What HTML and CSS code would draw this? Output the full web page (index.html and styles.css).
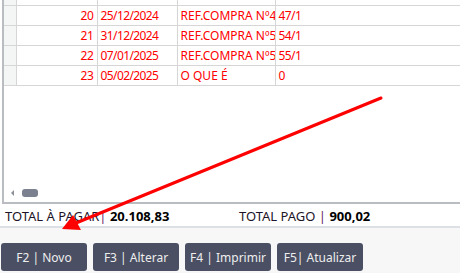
FILE: index.html
```html
<!DOCTYPE html>
<html>
	<head>
		<meta charset="utf-8"/>
		<title>Contas</title>
		<link rel="stylesheet" href="styles.css">
	</head>
	<body>
		<div class="grid">
			<table class="rows">
				<tr><td class="hd"></td><td class="num"></td><td class="dt"></td><td></td><td class="dt"></td></tr>
				<tr><td class="hd"></td><td class="num">20</td><td class="dt">25/12/2024</td><td>REF.COMPRA Nº4</td><td class="dt">47/1</td></tr>
				<tr><td class="hd"></td><td class="num">21</td><td class="dt">31/12/2024</td><td>REF.COMPRA Nº5</td><td class="dt">54/1</td></tr>
				<tr><td class="hd"></td><td class="num">22</td><td class="dt">07/01/2025</td><td>REF.COMPRA Nº5</td><td class="dt">55/1</td></tr>
				<tr><td class="hd"></td><td class="num">23</td><td class="dt">05/02/2025</td><td>O QUE É</td><td class="dt">0</td></tr>
			</table>
			<div class="fill"></div>
			<div class="hscroll">
				<span class="arr"></span>
				<span class="thumb"></span>
			</div>
		</div>

		<div class="totals">
			<p class="tot first">TOTAL À PAGAR<i>|</i> <b>20.108,83</b></p>
			<p class="tot">TOTAL PAGO <i>|</i> <b>900,02</b></p>
		</div>

		<div class="bar">
			<a href="#" class="btn">F2 | Novo</a>
			<a href="#" class="btn">F3 | Alterar</a>
			<a href="#" class="btn">F4 | Imprimir</a>
			<a href="#" class="btn">F5| Atualizar</a>
		</div>

		<svg class="pointer" width="460" height="273" viewBox="0 0 460 273">
			<line x1="381" y1="98" x2="76" y2="223" stroke="#ff0000" stroke-width="3" stroke-linecap="round"/>
			<polygon points="62,229 73,215 81,230" fill="#ff0000"/>
		</svg>
	</body>
</html>
```

FILE: styles.css
```css
*{margin:0;padding:0;box-sizing:border-box;}
body
{
	width:460px;
	height:273px;
	overflow:hidden;
	position:relative;
	background:#ffffff;
	font-family:"Noto Sans","Open Sans",sans-serif;
	font-size:12px;
}
.grid
{
	height:204px;
	margin-left:2px;
	border-left:2px solid #b9bcc0;
	border-bottom:2px solid #b9bcc0;
	display:flex;
	flex-direction:column;
	overflow:hidden;
}
.rows
{
	width:100%;
	margin-top:-15px;
	border-collapse:collapse;
	table-layout:fixed;
}
.rows td
{
	height:20px;
	padding:0 3px;
	border-right:1px solid #d6d6d6;
	border-bottom:1px solid #d6d6d6;
	color:#ff0000;
	white-space:nowrap;
	overflow:hidden;
	text-overflow:clip;
	line-height:19px;
}
.rows td:nth-child(1){width:12px;padding:0;background:#f3f6f4;}
.rows td:nth-child(2){width:81px;}
.rows td:nth-child(3){width:80px;}
.rows td:nth-child(4){width:98px;}
.rows td:last-child{border-right:none;}
.rows td.num{text-align:right;letter-spacing:-0.4px;}
.rows td.dt{letter-spacing:-0.6px;}
.fill{flex:1;}
.hscroll
{
	height:14px;
	display:flex;
	align-items:center;
	padding-left:7px;
	padding-bottom:4px;
}
.arr
{
	width:0;
	height:0;
	border-top:3px solid transparent;
	border-bottom:3px solid transparent;
	border-right:3px solid #8a8f98;
}
.thumb
{
	width:16px;
	height:8px;
	margin-left:8px;
	border-radius:3px;
	background:#7c8190;
}
.totals
{
	height:24px;
	display:flex;
	align-items:center;
	padding:1px 0 0 5px;
	border-bottom:2px solid #dde1e5;
	color:#1c1428;
	font-size:13px;
}
.tot i{font-style:normal;color:#6a1a6a;}
.tot b{color:#000;}
.first{width:234px;}
.bar
{
	height:45px;
	background:#f7f7f7;
	display:flex;
	gap:6px;
	padding:15px 0 0 1px;
}
.btn
{
	width:86px;
	height:28px;
	display:flex;
	align-items:center;
	justify-content:center;
	background:#4a4f63;
	color:#eeeeee;
	border-radius:3px;
	text-decoration:none;
}
.pointer
{
	position:absolute;
	left:0;
	top:0;
}
```
